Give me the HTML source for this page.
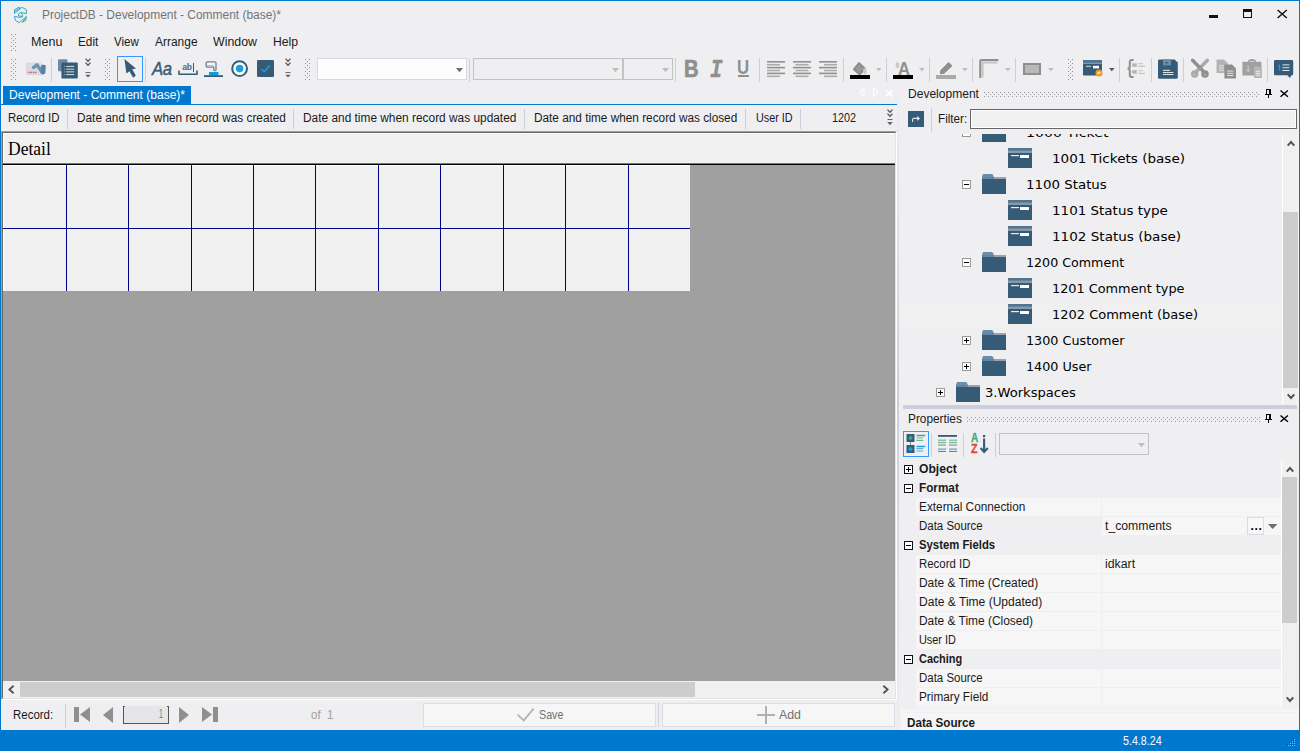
<!DOCTYPE html>
<html lang="en"><head><meta charset="utf-8"><title>ProjectDB - Development - Comment (base)*</title>
<style>
html,body{margin:0;padding:0;}
body{width:1300px;height:751px;overflow:hidden;background:#efeff1;position:relative;font-family:"Liberation Sans",sans-serif;font-size:12px;}
#app{position:absolute;left:0;top:0;width:1300px;height:751px;overflow:hidden;background:#efeff1;}
#app div,#app span.t,#app svg.i{position:absolute;box-sizing:border-box;}
span.t{white-space:pre;}
svg.i{overflow:visible;}
</style></head><body><div id="app">
<div style="left:0px;top:0px;width:1300px;height:1px;background:#0078d0;"></div>
<div style="left:0px;top:0px;width:1px;height:751px;background:#0078d0;"></div>
<div style="left:1299px;top:0px;width:1px;height:751px;background:#0078d0;"></div>
<div style="left:0px;top:730px;width:1300px;height:21px;background:#0078d0;"></div>
<svg class="i" style="left:13px;top:6px" width="16" height="18" viewBox="0 0 16 18" ><defs><linearGradient id="lg" x1="0" y1="0" x2="1" y2="1"><stop offset="0" stop-color="#2a9de0"/><stop offset="0.55" stop-color="#2ba3b4"/><stop offset="1" stop-color="#3aa66a"/></linearGradient></defs>
<g fill="none" stroke="url(#lg)" stroke-width="0.95" stroke-linejoin="round" stroke-linecap="round">
<path d="M1.5 7.4 V3.7 L5.9 1.3 L7.3 2.1 L2.7 4.7 V6.5 L8.9 1.3 L13.4 3.7 V7.6 L7.6 6.5 L5.6 7.7 V9.9 L9.4 10.5 V8.3 L7.6 6.5"/>
<path d="M9.4 10.5 L7.4 11.5 L1.5 10.4 L2.4 14.5 L6.4 16.6 L13.4 10.4 L12.8 14.4 L9.2 16.4 L12.4 12.4"/>
</g></svg>
<span class="t" style="left:42.2px;top:2.84px;font-family:'Liberation Sans',sans-serif;font-size:12px;line-height:24px;color:#747474;transform:scaleX(0.9952);transform-origin:0 0;">ProjectDB - Development - Comment (base)*</span>
<div style="left:1209px;top:15px;width:9px;height:3px;background:#111;"></div>
<div style="left:1243px;top:9px;width:9px;height:9px;border:1px solid #111;border-top-width:3px;"></div>
<svg class="i" style="left:1277px;top:9px" width="11" height="11" viewBox="0 0 11 11" ><path d="M0.6 1 L9.8 9 M9.8 1 L0.6 9" stroke="#111" stroke-width="1.45" fill="none"/></svg>
<svg class="i" style="left:11px;top:34px" width="5" height="17" viewBox="0 0 5 17" ><g fill="#929292" shape-rendering="crispEdges"><rect x="0" y="0" width="1" height="1"/><rect x="4" y="0" width="1" height="1"/><rect x="2" y="2" width="1" height="1"/><rect x="0" y="4" width="1" height="1"/><rect x="4" y="4" width="1" height="1"/><rect x="2" y="6" width="1" height="1"/><rect x="0" y="8" width="1" height="1"/><rect x="4" y="8" width="1" height="1"/><rect x="2" y="10" width="1" height="1"/><rect x="0" y="12" width="1" height="1"/><rect x="4" y="12" width="1" height="1"/><rect x="2" y="14" width="1" height="1"/><rect x="0" y="16" width="1" height="1"/><rect x="4" y="16" width="1" height="1"/></g></svg>
<span class="t" style="left:31.36px;top:29.84px;font-family:'Liberation Sans',sans-serif;font-size:12px;line-height:24px;color:#1a1a1a;transform:scaleX(1.0442);transform-origin:0 0;">Menu</span>
<span class="t" style="left:78.22px;top:29.84px;font-family:'Liberation Sans',sans-serif;font-size:12px;line-height:24px;color:#1a1a1a;transform:scaleX(0.9823);transform-origin:0 0;">Edit</span>
<span class="t" style="left:113.8px;top:29.84px;font-family:'Liberation Sans',sans-serif;font-size:12px;line-height:24px;color:#1a1a1a;transform:scaleX(0.9631);transform-origin:0 0;">View</span>
<span class="t" style="left:154.7px;top:29.84px;font-family:'Liberation Sans',sans-serif;font-size:12px;line-height:24px;color:#1a1a1a;transform:scaleX(0.9964);transform-origin:0 0;">Arrange</span>
<span class="t" style="left:212.8px;top:29.84px;font-family:'Liberation Sans',sans-serif;font-size:12px;line-height:24px;color:#1a1a1a;transform:scaleX(1.0292);transform-origin:0 0;">Window</span>
<span class="t" style="left:273.08px;top:29.84px;font-family:'Liberation Sans',sans-serif;font-size:12px;line-height:24px;color:#1a1a1a;transform:scaleX(1.0151);transform-origin:0 0;">Help</span>
<svg class="i" style="left:11px;top:59px" width="5" height="21" viewBox="0 0 5 21" ><g fill="#929292" shape-rendering="crispEdges"><rect x="0" y="0" width="1" height="1"/><rect x="4" y="0" width="1" height="1"/><rect x="2" y="2" width="1" height="1"/><rect x="0" y="4" width="1" height="1"/><rect x="4" y="4" width="1" height="1"/><rect x="2" y="6" width="1" height="1"/><rect x="0" y="8" width="1" height="1"/><rect x="4" y="8" width="1" height="1"/><rect x="2" y="10" width="1" height="1"/><rect x="0" y="12" width="1" height="1"/><rect x="4" y="12" width="1" height="1"/><rect x="2" y="14" width="1" height="1"/><rect x="0" y="16" width="1" height="1"/><rect x="4" y="16" width="1" height="1"/><rect x="2" y="18" width="1" height="1"/><rect x="0" y="20" width="1" height="1"/><rect x="4" y="20" width="1" height="1"/></g></svg>
<svg class="i" style="left:105px;top:59px" width="5" height="21" viewBox="0 0 5 21" ><g fill="#929292" shape-rendering="crispEdges"><rect x="0" y="0" width="1" height="1"/><rect x="4" y="0" width="1" height="1"/><rect x="2" y="2" width="1" height="1"/><rect x="0" y="4" width="1" height="1"/><rect x="4" y="4" width="1" height="1"/><rect x="2" y="6" width="1" height="1"/><rect x="0" y="8" width="1" height="1"/><rect x="4" y="8" width="1" height="1"/><rect x="2" y="10" width="1" height="1"/><rect x="0" y="12" width="1" height="1"/><rect x="4" y="12" width="1" height="1"/><rect x="2" y="14" width="1" height="1"/><rect x="0" y="16" width="1" height="1"/><rect x="4" y="16" width="1" height="1"/><rect x="2" y="18" width="1" height="1"/><rect x="0" y="20" width="1" height="1"/><rect x="4" y="20" width="1" height="1"/></g></svg>
<svg class="i" style="left:305px;top:59px" width="5" height="21" viewBox="0 0 5 21" ><g fill="#929292" shape-rendering="crispEdges"><rect x="0" y="0" width="1" height="1"/><rect x="4" y="0" width="1" height="1"/><rect x="2" y="2" width="1" height="1"/><rect x="0" y="4" width="1" height="1"/><rect x="4" y="4" width="1" height="1"/><rect x="2" y="6" width="1" height="1"/><rect x="0" y="8" width="1" height="1"/><rect x="4" y="8" width="1" height="1"/><rect x="2" y="10" width="1" height="1"/><rect x="0" y="12" width="1" height="1"/><rect x="4" y="12" width="1" height="1"/><rect x="2" y="14" width="1" height="1"/><rect x="0" y="16" width="1" height="1"/><rect x="4" y="16" width="1" height="1"/><rect x="2" y="18" width="1" height="1"/><rect x="0" y="20" width="1" height="1"/><rect x="4" y="20" width="1" height="1"/></g></svg>
<svg class="i" style="left:1068px;top:59px" width="5" height="21" viewBox="0 0 5 21" ><g fill="#929292" shape-rendering="crispEdges"><rect x="0" y="0" width="1" height="1"/><rect x="4" y="0" width="1" height="1"/><rect x="2" y="2" width="1" height="1"/><rect x="0" y="4" width="1" height="1"/><rect x="4" y="4" width="1" height="1"/><rect x="2" y="6" width="1" height="1"/><rect x="0" y="8" width="1" height="1"/><rect x="4" y="8" width="1" height="1"/><rect x="2" y="10" width="1" height="1"/><rect x="0" y="12" width="1" height="1"/><rect x="4" y="12" width="1" height="1"/><rect x="2" y="14" width="1" height="1"/><rect x="0" y="16" width="1" height="1"/><rect x="4" y="16" width="1" height="1"/><rect x="2" y="18" width="1" height="1"/><rect x="0" y="20" width="1" height="1"/><rect x="4" y="20" width="1" height="1"/></g></svg>
<div style="left:51px;top:58px;width:1px;height:24px;background:#cdd0da;"></div>
<div style="left:145px;top:58px;width:1px;height:24px;background:#cdd0da;"></div>
<div style="left:469px;top:58px;width:1px;height:24px;background:#cdd0da;"></div>
<div style="left:675px;top:58px;width:1px;height:24px;background:#cdd0da;"></div>
<div style="left:759px;top:58px;width:1px;height:24px;background:#cdd0da;"></div>
<div style="left:843px;top:58px;width:1px;height:24px;background:#cdd0da;"></div>
<div style="left:886px;top:58px;width:1px;height:24px;background:#cdd0da;"></div>
<div style="left:929px;top:58px;width:1px;height:24px;background:#cdd0da;"></div>
<div style="left:972px;top:58px;width:1px;height:24px;background:#cdd0da;"></div>
<div style="left:1015px;top:58px;width:1px;height:24px;background:#cdd0da;"></div>
<div style="left:1119px;top:58px;width:1px;height:24px;background:#cdd0da;"></div>
<div style="left:1151px;top:58px;width:1px;height:24px;background:#cdd0da;"></div>
<div style="left:1183px;top:58px;width:1px;height:24px;background:#cdd0da;"></div>
<div style="left:1267px;top:58px;width:1px;height:24px;background:#cdd0da;"></div>
<div style="left:117px;top:56px;width:26px;height:26px;border:1px solid #3399ff;"></div>
<div style="left:317px;top:58px;width:150px;height:22px;border:1px solid #d6d8e3;background:#fdfdfd;"></div>
<svg class="i" style="left:456px;top:68px" width="7" height="5" viewBox="0 0 7 5" ><path d="M0 0 H7 L3.5 4.2 Z" fill="#6e6e6e"/></svg>
<div style="left:473px;top:58px;width:150px;height:22px;border:1px solid #c2c2c2;"></div>
<div style="left:623px;top:58px;width:50px;height:22px;border:1px solid #c2c2c2;"></div>
<svg class="i" style="left:612px;top:68px" width="7" height="5" viewBox="0 0 7 5" ><path d="M0 0 H7 L3.5 4.2 Z" fill="#bdbdbd"/></svg>
<svg class="i" style="left:662px;top:68px" width="7" height="5" viewBox="0 0 7 5" ><path d="M0 0 H7 L3.5 4.2 Z" fill="#bdbdbd"/></svg>
<svg class="i" style="left:875.9px;top:68px" width="6" height="4" viewBox="0 0 6 4" ><path d="M0 0 H5.6 L2.8 3.2 Z" fill="#bdbdbd"/></svg>
<svg class="i" style="left:918.9px;top:68px" width="6" height="4" viewBox="0 0 6 4" ><path d="M0 0 H5.6 L2.8 3.2 Z" fill="#bdbdbd"/></svg>
<svg class="i" style="left:961.9px;top:68px" width="6" height="4" viewBox="0 0 6 4" ><path d="M0 0 H5.6 L2.8 3.2 Z" fill="#bdbdbd"/></svg>
<svg class="i" style="left:1004.9px;top:68px" width="6" height="4" viewBox="0 0 6 4" ><path d="M0 0 H5.6 L2.8 3.2 Z" fill="#bdbdbd"/></svg>
<svg class="i" style="left:1047.9px;top:68px" width="6" height="4" viewBox="0 0 6 4" ><path d="M0 0 H5.6 L2.8 3.2 Z" fill="#bdbdbd"/></svg>
<svg class="i" style="left:1108.9px;top:68px" width="6" height="4" viewBox="0 0 6 4" ><path d="M0 0 H5.6 L2.8 3.2 Z" fill="#555"/></svg>
<svg class="i" style="left:26px;top:62px" width="21" height="14" viewBox="0 0 21 14" ><rect x="0.3" y="1.2" width="15" height="11.6" rx="0.8" fill="#d9dce1" stroke="#d0d3d8" stroke-width="0.6"/><g fill="#e8524a"><rect x="2.2" y="9.7" width="1.5" height="1.4"/><rect x="4.5" y="9.7" width="1.5" height="1.4"/><rect x="6.8" y="9.7" width="1.5" height="1.4"/><rect x="9.1" y="9.7" width="1.5" height="1.4"/></g><path d="M7.6 5.4 L11 2.9 L16.4 10.6" fill="none" stroke="#7092b5" stroke-width="3.4" stroke-linecap="round" stroke-linejoin="round"/><rect x="14.9" y="2.7" width="4.7" height="9.6" rx="1.6" fill="#5d81a4" transform="rotate(4 17 7)"/></svg>
<svg class="i" style="left:58px;top:59px" width="21" height="21" viewBox="0 0 21 21" ><rect x="0" y="0.2" width="9.4" height="12" rx="1" fill="#6b8bab"/><rect x="3.4" y="3.4" width="16.4" height="16.2" rx="1" fill="#355b76"/><g fill="#c9d2da"><rect x="8.2" y="6.9" width="8" height="1.1"/><rect x="8.2" y="9.6" width="8" height="1.1"/><rect x="8.2" y="12.3" width="8" height="1.1"/><rect x="8.2" y="15" width="8" height="1.1"/></g><g fill="#9fb0bf"><rect x="6.2" y="6.9" width="1" height="1.1"/><rect x="6.2" y="9.6" width="1" height="1.1"/><rect x="6.2" y="12.3" width="1" height="1.1"/><rect x="6.2" y="15" width="1" height="1.1"/></g></svg>
<svg class="i" style="left:84.6px;top:57.8px" width="6" height="21" viewBox="0 0 6 21" ><g fill="none" stroke="#555" stroke-width="1.3"><path d="M0.5 0.6 L3 3.2 L5.5 0.6"/><path d="M0.5 4.6 L3 7.2 L5.5 4.6"/></g><rect x="0.5" y="14" width="5" height="1" fill="#666"/><path d="M0.3 16.8 H5.7 L3 19.6 Z" fill="#666"/></svg>
<svg class="i" style="left:284.6px;top:57.8px" width="6" height="21" viewBox="0 0 6 21" ><g fill="none" stroke="#555" stroke-width="1.3"><path d="M0.5 0.6 L3 3.2 L5.5 0.6"/><path d="M0.5 4.6 L3 7.2 L5.5 4.6"/></g><rect x="0.5" y="14" width="5" height="1" fill="#666"/><path d="M0.3 16.8 H5.7 L3 19.6 Z" fill="#666"/></svg>
<svg class="i" style="left:124px;top:59px" width="13" height="20" viewBox="0 0 13 20" ><path d="M0.4 0 L12 9.4 L8.2 10.2 L11.8 16.6 L9.2 18.8 L5.4 12.2 L2.4 14.6 Z" fill="#355b76"/></svg>
<span class="t" style="left:151.6px;top:57.36px;font-family:'Liberation Sans',sans-serif;font-size:18px;line-height:24px;color:#355b76;font-style:italic;transform:scaleX(0.93);transform-origin:0 0;letter-spacing:-0.5px;-webkit-text-stroke:0.45px #365c78;">Aa</span>
<span class="t" style="left:182.2px;top:55.02px;font-family:'Liberation Sans',sans-serif;font-size:8.6px;line-height:24px;color:#4a6d89;font-weight:700;letter-spacing:-0.2px;">ab</span>
<div style="left:193.2px;top:63.4px;width:1.2px;height:8.2px;background:#355b76;"></div>
<svg class="i" style="left:178px;top:70px" width="20" height="6" viewBox="0 0 20 6" ><path d="M1 0.5 V4.2 H19 V0.5" fill="none" stroke="#355b76" stroke-width="1.6" stroke-linejoin="round"/></svg>
<svg class="i" style="left:204px;top:61px" width="20" height="17" viewBox="0 0 20 17" ><path d="M3.2 0.9 H10.8 Q12 0.9 12 2.1 V8.4 Q12 9.6 10.9 9.6 Q9.8 9.6 9.8 8.4 V6.2 H3.2 Q2.2 6.2 2.2 5.2 V1.9 Q2.2 0.9 3.2 0.9 Z" fill="#f4f5f7" stroke="#6d8197" stroke-width="1.3"/><path d="M3.4 4.6 H9.6" stroke="#8d9bab" stroke-width="1" stroke-dasharray="1 0.6"/><rect x="5" y="11" width="9.5" height="3.4" fill="#0c9ddd"/><rect x="0" y="14.2" width="19" height="1.8" fill="#355b76"/></svg>
<svg class="i" style="left:231px;top:60px" width="18" height="18" viewBox="0 0 18 18" ><circle cx="8.6" cy="8.6" r="7.4" fill="#fff" stroke="#355b76" stroke-width="2"/><circle cx="8.6" cy="8.6" r="3.8" fill="#1a9fe0"/></svg>
<svg class="i" style="left:257px;top:60px" width="18" height="18" viewBox="0 0 18 18" ><rect x="0" y="0" width="17" height="17" rx="1.2" fill="#355b76"/><path d="M4.2 9 L7.4 11.8 L12.8 5.2" fill="none" stroke="#1a9fe0" stroke-width="1.5"/></svg>
<span class="t" style="left:683.6px;top:56.68px;font-family:'Liberation Sans',sans-serif;font-size:24px;line-height:24px;color:#8f8f8f;font-weight:700;transform:scaleX(0.84);transform-origin:0 0;-webkit-text-stroke:0.7px #8f8f8f;">B</span>
<span class="t" style="left:709.6px;top:58.07px;font-family:'Liberation Mono',monospace;font-size:26px;line-height:24px;color:#8f8f8f;font-weight:700;font-style:italic;transform:scaleX(0.8);transform-origin:0 0;-webkit-text-stroke:0.5px #8f8f8f;">I</span>
<span class="t" style="left:737px;top:55.32px;font-family:'Liberation Sans',sans-serif;font-size:21px;line-height:24px;color:#8f8f8f;font-weight:700;transform:scaleX(0.8);transform-origin:0 0;">U</span>
<div style="left:738px;top:75.2px;width:11px;height:1.8px;background:#8f8f8f;"></div>
<svg class="i" style="left:767px;top:61px" width="18" height="17" viewBox="0 0 18 17" ><rect x="0" y="0.0" width="18" height="1.6" fill="#909090"/><rect x="0" y="2.9" width="13" height="1.6" fill="#ababab"/><rect x="0" y="5.8" width="18" height="1.6" fill="#909090"/><rect x="0" y="8.7" width="13" height="1.6" fill="#ababab"/><rect x="0" y="11.6" width="18" height="1.6" fill="#909090"/><rect x="0" y="14.5" width="13" height="1.6" fill="#ababab"/></svg>
<svg class="i" style="left:793px;top:61px" width="18" height="17" viewBox="0 0 18 17" ><rect x="0.0" y="0.0" width="18" height="1.6" fill="#909090"/><rect x="2.5" y="2.9" width="13" height="1.6" fill="#ababab"/><rect x="0.0" y="5.8" width="18" height="1.6" fill="#909090"/><rect x="2.5" y="8.7" width="13" height="1.6" fill="#ababab"/><rect x="0.0" y="11.6" width="18" height="1.6" fill="#909090"/><rect x="2.5" y="14.5" width="13" height="1.6" fill="#ababab"/></svg>
<svg class="i" style="left:819px;top:61px" width="18" height="17" viewBox="0 0 18 17" ><rect x="0" y="0.0" width="18" height="1.6" fill="#909090"/><rect x="5" y="2.9" width="13" height="1.6" fill="#ababab"/><rect x="0" y="5.8" width="18" height="1.6" fill="#909090"/><rect x="5" y="8.7" width="13" height="1.6" fill="#ababab"/><rect x="0" y="11.6" width="18" height="1.6" fill="#909090"/><rect x="5" y="14.5" width="13" height="1.6" fill="#ababab"/></svg>
<svg class="i" style="left:850px;top:61px" width="21" height="18" viewBox="0 0 21 18" ><path d="M9 0.8 L15.6 7 Q16.2 7.6 15.6 8.3 L11 13.4 Q9.6 14.6 8.2 13.4 L3.4 9.2 Q2.6 8.2 3.4 7.2 Z" fill="#8f8f8f"/><g stroke="#ababab" stroke-width="0.7" fill="none"><path d="M6.2 6.4 L10 10 M8 4.8 L11.8 8.4 M6.6 9 L10.2 5.2 M8.4 10.6 L12 6.8"/></g><rect x="13.2" y="7.2" width="3.2" height="6" rx="1.4" fill="#c8c8c8"/><rect x="0" y="14" width="20" height="4" fill="#000"/></svg>
<span class="t" style="left:897.6px;top:56.59px;font-family:'Liberation Sans',sans-serif;font-size:18.5px;line-height:24px;color:#8f8f8f;font-weight:700;transform:scaleX(0.9);transform-origin:0 0;">A</span>
<svg class="i" style="left:893px;top:61px" width="21" height="18" viewBox="0 0 21 18" ><ellipse cx="4.5" cy="4.2" rx="1.8" ry="2.9" fill="#c8c8c8"/><rect x="0" y="14" width="20" height="4" fill="#000"/></svg>
<svg class="i" style="left:936px;top:61px" width="21" height="18" viewBox="0 0 21 18" ><path d="M12.6 1.6 L16 4.8 L8.2 12.2 L4.4 12.8 L4.8 9.4 Z" fill="#8f8f8f" stroke="#8f8f8f" stroke-width="1" stroke-linejoin="round"/><rect x="0" y="14" width="20" height="4" fill="#aaa"/></svg>
<svg class="i" style="left:979px;top:59px" width="21" height="20" viewBox="0 0 21 20" ><path d="M1.2 19 V2.2 Q1.2 1 2.4 1 H19.4" fill="none" stroke="#8f8f8f" stroke-width="2"/><path d="M3.5 18.4 V3.5 H18.6" fill="none" stroke="#c4c4c4" stroke-width="2.1"/></svg>
<div style="left:1023px;top:63px;width:18px;height:12px;background:#b9b9b9;border:2px solid #8f8f8f;"></div>
<svg class="i" style="left:1083px;top:60px" width="21" height="17" viewBox="0 0 21 17" ><rect x="0" y="0" width="19" height="15.6" rx="1.2" fill="#355b76"/><rect x="0" y="0" width="19" height="3" rx="1" fill="#4d7596"/><rect x="0" y="2.8" width="19" height="1" fill="#9aa7b3"/><rect x="3" y="5.8" width="5" height="1" fill="#d5dde3"/><rect x="10" y="5.8" width="6" height="2.6" fill="#fff"/><circle cx="16" cy="13" r="3.5" fill="#f39a1d"/><path d="M14.6 13.6 L17.4 12.2" stroke="#fff" stroke-width="1.3"/></svg>
<svg class="i" style="left:1127px;top:59px" width="19" height="20" viewBox="0 0 19 20" ><path d="M6.6 0.9 H4.8 Q2.8 0.9 2.8 2.8 V7.4 Q2.8 9.2 0.6 9.4 Q2.8 9.6 2.8 11.4 V16.2 Q2.8 18 4.8 18 H6.6" fill="none" stroke="#8f8f8f" stroke-width="2"/><rect x="5.2" y="4.4" width="4.6" height="3.4" fill="#b4b4b4"/><rect x="5.2" y="11.2" width="4.6" height="3.4" fill="#b4b4b4"/><g fill="#c4c4c4"><rect x="11.2" y="4.2" width="4.6" height="1"/><rect x="11.2" y="6.6" width="6.8" height="1.2"/><rect x="11.2" y="11.2" width="4.6" height="1"/><rect x="11.2" y="13.8" width="6.8" height="1.2"/></g></svg>
<svg class="i" style="left:1158px;top:59px" width="21" height="21" viewBox="0 0 21 21" ><path d="M1.4 0.4 H16.6 L19.8 3.6 V18.4 Q19.8 19.8 18.4 19.8 H1.4 Q0 19.8 0 18.4 V1.8 Q0 0.4 1.4 0.4 Z" fill="#355b76"/><rect x="5" y="0.4" width="8" height="6" fill="#6b8bab"/><rect x="7" y="3.2" width="3" height="1" fill="#355b76"/><g fill="#dfe6eb"><rect x="5" y="10.8" width="7" height="1.1"/><rect x="5" y="13" width="10.4" height="1"/><rect x="5" y="15" width="10.4" height="1"/></g></svg>
<svg class="i" style="left:1190px;top:59px" width="20" height="20" viewBox="0 0 20 20" ><path d="M17.4 1.2 L5 14" stroke="#a9a9a9" stroke-width="3.4" stroke-linecap="round" fill="none"/><circle cx="4.7" cy="15" r="2.5" fill="none" stroke="#a9a9a9" stroke-width="2.5"/><path d="M2.6 1.2 L15 14" stroke="#8f8f8f" stroke-width="3.4" stroke-linecap="round" fill="none"/><circle cx="15" cy="15" r="2.5" fill="none" stroke="#8f8f8f" stroke-width="2.5"/><circle cx="10" cy="9.6" r="0.8" fill="#b5b5b5"/></svg>
<svg class="i" style="left:1216px;top:59px" width="21" height="20" viewBox="0 0 21 20" ><path d="M0.5 0.4 H8 L12 4.4 V14 H0.5 Z" fill="#b3b3b3"/><g fill="#e4e4e4"><rect x="3" y="6.4" width="5" height="1"/><rect x="3" y="8.6" width="5" height="1"/><rect x="3" y="10.8" width="5" height="1"/></g><path d="M8.4 5.4 H16 L20 9.4 V19.6 H8.4 Z" fill="#8f8f8f"/><g fill="#e4e4e4"><rect x="11" y="11.6" width="6.4" height="1"/><rect x="11" y="13.8" width="6.4" height="1"/><rect x="11" y="16" width="6.4" height="1"/></g></svg>
<svg class="i" style="left:1242px;top:59px" width="21" height="20" viewBox="0 0 21 20" ><path d="M6 2.8 Q6 0 10 0 Q14 0 14 2.8 H19.4 V16.4 H0.4 V2.8 Z" fill="#a0a0a0"/><rect x="7.4" y="1.9" width="5.2" height="1" rx="0.5" fill="#cfcfcf"/><path d="M6.2 6.8 V12.4 M4 10.4 L6.2 12.6 L8.4 10.4" stroke="#cfcfcf" stroke-width="1" fill="none"/><path d="M12 7.4 H17.4 L19.8 9.8 V19 H12 Z" fill="#b6b6b6"/><g fill="#ededed"><rect x="13.8" y="11.8" width="4.2" height="1"/><rect x="13.8" y="13.8" width="4.2" height="1"/><rect x="13.8" y="15.8" width="4.2" height="1"/></g></svg>
<svg class="i" style="left:1274px;top:60px" width="20" height="18" viewBox="0 0 20 18" ><path d="M1.2 0 H18 Q19.2 0 19.2 1.2 V14 Q19.2 15.2 18 15.2 H17.4 L16 18 L13.4 15.2 H1.2 Q0 15.2 0 14 V1.2 Q0 0 1.2 0 Z" fill="#355b76"/><g fill="#dfe6eb"><rect x="8.4" y="4.4" width="7" height="1"/><rect x="8.4" y="7.2" width="7" height="1"/><rect x="8.4" y="10" width="7" height="1"/></g><path d="M5.6 4.8 V10.8 M4.2 6.6 L5.6 5" stroke="#1a9fe0" stroke-width="1.2" fill="none"/></svg>
<div style="left:3px;top:86px;width:188px;height:19px;background:#0078d0;"></div>
<div style="left:1px;top:104px;width:896px;height:1px;background:#0078d0;"></div>
<span class="t" style="left:8.6px;top:82.84px;font-family:'Liberation Sans',sans-serif;font-size:12px;line-height:24px;color:#fff;transform:scaleX(1.0037);transform-origin:0 0;">Development - Comment (base)*</span>
<svg class="i" style="left:859px;top:88px" width="6" height="10" viewBox="0 0 6 10" ><path d="M5 0.6 V8.6 L0.6 4.6 Z" fill="none" stroke="#fff" stroke-width="1.1" stroke-linejoin="miter"/></svg>
<svg class="i" style="left:873px;top:88px" width="6" height="10" viewBox="0 0 6 10" ><path d="M0.5 0.6 V8.6 L4.9 4.6 Z" fill="none" stroke="#fff" stroke-width="1.1" stroke-linejoin="miter"/></svg>
<svg class="i" style="left:885px;top:90px" width="9" height="8" viewBox="0 0 9 8" ><path d="M0.5 0.4 L7.7 6.7 M7.7 0.4 L0.5 6.7" stroke="#fff" stroke-width="1.6" fill="none"/></svg>
<span class="t" style="left:8.15px;top:105.84px;font-family:'Liberation Sans',sans-serif;font-size:12px;line-height:24px;color:#1a1a1a;transform:scaleX(0.9524);transform-origin:0 0;">Record ID</span>
<span class="t" style="left:77.11px;top:105.84px;font-family:'Liberation Sans',sans-serif;font-size:12px;line-height:24px;color:#1a1a1a;transform:scaleX(0.9850);transform-origin:0 0;">Date and time when record was created</span>
<span class="t" style="left:303.11px;top:105.84px;font-family:'Liberation Sans',sans-serif;font-size:12px;line-height:24px;color:#1a1a1a;transform:scaleX(0.9904);transform-origin:0 0;">Date and time when record was updated</span>
<span class="t" style="left:534.32px;top:105.84px;font-family:'Liberation Sans',sans-serif;font-size:12px;line-height:24px;color:#1a1a1a;transform:scaleX(0.9829);transform-origin:0 0;">Date and time when record was closed</span>
<span class="t" style="left:755.6px;top:105.84px;font-family:'Liberation Sans',sans-serif;font-size:12px;line-height:24px;color:#1a1a1a;transform:scaleX(0.9019);transform-origin:0 0;">User ID</span>
<span class="t" style="left:832.0px;top:105.84px;font-family:'Liberation Sans',sans-serif;font-size:12px;line-height:24px;color:#1a1a1a;transform:scaleX(0.9000);transform-origin:0 0;">1202</span>
<div style="left:67px;top:109px;width:1px;height:20px;background:#cdd0da;"></div>
<div style="left:293px;top:109px;width:1px;height:20px;background:#cdd0da;"></div>
<div style="left:524px;top:109px;width:1px;height:20px;background:#cdd0da;"></div>
<div style="left:745px;top:109px;width:1px;height:20px;background:#cdd0da;"></div>
<div style="left:800px;top:109px;width:1px;height:20px;background:#cdd0da;"></div>
<svg class="i" style="left:887px;top:109px" width="6" height="17" viewBox="0 0 6 17" ><g fill="none" stroke="#555" stroke-width="1.3"><path d="M0.5 0.6 L3 3.2 L5.5 0.6"/><path d="M0.5 4.6 L3 7.2 L5.5 4.6"/></g><rect x="0.5" y="10" width="5" height="1" fill="#666"/><path d="M0.2 13 H5.8 L3 16.2 Z" fill="#666"/></svg>
<div style="left:1px;top:131px;width:896px;height:569px;background:#a0a0a0;border-style:solid;border-width:1px;border-color:#a0a0a0 #fff #fff #a0a0a0;"></div>
<div style="left:2px;top:132px;width:894px;height:567px;background:#a0a0a0;border-style:solid;border-width:1px;border-color:#696969 #e3e3e3 #e3e3e3 #696969;"></div>
<div style="left:3px;top:133px;width:892px;height:31px;background:#f0f0f0;border-top:1px solid #fff;border-left:1px solid #fff;"></div>
<div style="left:3px;top:163px;width:892px;height:1px;background:#7a7a7a;"></div>
<div style="left:3px;top:164px;width:892px;height:1px;background:#000;"></div>
<span class="t" style="left:8.21px;top:136.99px;font-family:'Liberation Serif',serif;font-size:17.8px;line-height:24px;color:#000;transform:scaleX(0.9859);transform-origin:0 0;">Detail</span>
<div style="left:3px;top:165px;width:687px;height:126px;background:#f0f0f0;border-top:1px solid #fff;border-left:1px solid #fff;"></div>
<div style="left:66px;top:165px;width:1px;height:126px;background:#00008b;"></div>
<div style="left:128px;top:165px;width:1px;height:126px;background:#00008b;"></div>
<div style="left:191px;top:165px;width:1px;height:126px;background:#00008b;"></div>
<div style="left:253px;top:165px;width:1px;height:126px;background:#00008b;"></div>
<div style="left:315px;top:165px;width:1px;height:126px;background:#00008b;"></div>
<div style="left:378px;top:165px;width:1px;height:126px;background:#00008b;"></div>
<div style="left:440px;top:165px;width:1px;height:126px;background:#00008b;"></div>
<div style="left:503px;top:165px;width:1px;height:126px;background:#00008b;"></div>
<div style="left:565px;top:165px;width:1px;height:126px;background:#00008b;"></div>
<div style="left:628px;top:165px;width:1px;height:126px;background:#00008b;"></div>
<div style="left:3px;top:228px;width:687px;height:1px;background:#00008b;"></div>
<div style="left:3px;top:681px;width:892px;height:17px;background:#f0f0f0;"></div>
<div style="left:20px;top:682px;width:675px;height:15px;background:#cdcdcd;"></div>
<svg class="i" style="left:8px;top:685px" width="7" height="9" viewBox="0 0 7 9" ><path d="M5.6 0.8 L1.4 4.5 L5.6 8.2" stroke="#505050" stroke-width="1.8" fill="none"/></svg>
<svg class="i" style="left:882px;top:685px" width="7" height="9" viewBox="0 0 7 9" ><path d="M1.4 0.8 L5.6 4.5 L1.4 8.2" stroke="#505050" stroke-width="1.8" fill="none"/></svg>
<span class="t" style="left:13.45px;top:702.84px;font-family:'Liberation Sans',sans-serif;font-size:12px;line-height:24px;color:#1a1a1a;transform:scaleX(0.9550);transform-origin:0 0;">Record:</span>
<div style="left:65px;top:704px;width:1px;height:24px;background:#cdd0da;"></div>
<svg class="i" style="left:74px;top:707px" width="17" height="16" viewBox="0 0 17 16" ><rect x="0" y="0" width="5" height="15" fill="#8f8f8f"/><path d="M16 0 L6 7.5 L16 15 Z" fill="#8f8f8f"/></svg>
<svg class="i" style="left:103px;top:707px" width="10" height="16" viewBox="0 0 10 16" ><path d="M10 0 L0 8 L10 16 Z" fill="#8f8f8f"/></svg>
<div style="left:123px;top:706px;width:46px;height:18px;background:#e6e6e9;border:1px solid #555;border-top-color:transparent;"></div>
<div style="left:123px;top:706px;width:2px;height:1px;background:#555;"></div>
<div style="left:167px;top:706px;width:2px;height:1px;background:#555;"></div>
<span class="t" style="left:158.91px;top:701.84px;font-family:'Liberation Sans',sans-serif;font-size:12px;line-height:24px;color:#757575;transform:scaleX(0.5905);transform-origin:0 0;">1</span>
<svg class="i" style="left:179px;top:707px" width="10" height="16" viewBox="0 0 10 16" ><path d="M0 0 L10 8 L0 16 Z" fill="#8f8f8f"/></svg>
<svg class="i" style="left:202px;top:707px" width="17" height="16" viewBox="0 0 17 16" ><rect x="11" y="0" width="5" height="15" fill="#8f8f8f"/><path d="M0 0 L10 7.5 L0 15 Z" fill="#8f8f8f"/></svg>
<span class="t" style="left:311.02px;top:702.84px;font-family:'Liberation Sans',sans-serif;font-size:12px;line-height:24px;color:#a0a0a0;transform:scaleX(0.9573);transform-origin:0 0;">of  1</span>
<div style="left:423px;top:703px;width:233px;height:24px;background:#f6f6f6;border:1px solid #dcdce8;"></div>
<div style="left:658px;top:703px;width:1px;height:24px;background:#cdd0da;"></div>
<div style="left:662px;top:703px;width:233px;height:24px;background:#f6f6f6;border:1px solid #dcdce8;"></div>
<svg class="i" style="left:517px;top:708px" width="18" height="14" viewBox="0 0 18 14" ><path d="M0.6 6.6 L6.8 12.4 L16.6 0.6" stroke="#b2b2b2" stroke-width="1.7" fill="none"/></svg>
<span class="t" style="left:538.85px;top:702.84px;font-family:'Liberation Sans',sans-serif;font-size:12px;line-height:24px;color:#707070;transform:scaleX(0.8914);transform-origin:0 0;">Save</span>
<svg class="i" style="left:757px;top:706px" width="18" height="18" viewBox="0 0 18 18" ><path d="M9 0 V18 M0 9 H18" stroke="#b0b0b0" stroke-width="2" fill="none"/></svg>
<span class="t" style="left:779.3px;top:702.84px;font-family:'Liberation Sans',sans-serif;font-size:12px;line-height:24px;color:#707070;transform:scaleX(1.0293);transform-origin:0 0;">Add</span>
<div style="left:897px;top:86px;width:2px;height:644px;background:linear-gradient(to bottom, #eeeef1 0%, #cccedb 50%, #eeeef1 100%);"></div>
<span class="t" style="left:908.2px;top:81.84px;font-family:'Liberation Sans',sans-serif;font-size:12px;line-height:24px;color:#1a1a1a;transform:scaleX(1.0036);transform-origin:0 0;">Development</span>
<svg class="i" style="left:984px;top:92px" width="275" height="5" viewBox="0 0 275 5" ><g fill="#999" shape-rendering="crispEdges"><rect x="0" y="0" width="1" height="1"/><rect x="0" y="4" width="1" height="1"/><rect x="2" y="2" width="1" height="1"/><rect x="4" y="0" width="1" height="1"/><rect x="4" y="4" width="1" height="1"/><rect x="6" y="2" width="1" height="1"/><rect x="8" y="0" width="1" height="1"/><rect x="8" y="4" width="1" height="1"/><rect x="10" y="2" width="1" height="1"/><rect x="12" y="0" width="1" height="1"/><rect x="12" y="4" width="1" height="1"/><rect x="14" y="2" width="1" height="1"/><rect x="16" y="0" width="1" height="1"/><rect x="16" y="4" width="1" height="1"/><rect x="18" y="2" width="1" height="1"/><rect x="20" y="0" width="1" height="1"/><rect x="20" y="4" width="1" height="1"/><rect x="22" y="2" width="1" height="1"/><rect x="24" y="0" width="1" height="1"/><rect x="24" y="4" width="1" height="1"/><rect x="26" y="2" width="1" height="1"/><rect x="28" y="0" width="1" height="1"/><rect x="28" y="4" width="1" height="1"/><rect x="30" y="2" width="1" height="1"/><rect x="32" y="0" width="1" height="1"/><rect x="32" y="4" width="1" height="1"/><rect x="34" y="2" width="1" height="1"/><rect x="36" y="0" width="1" height="1"/><rect x="36" y="4" width="1" height="1"/><rect x="38" y="2" width="1" height="1"/><rect x="40" y="0" width="1" height="1"/><rect x="40" y="4" width="1" height="1"/><rect x="42" y="2" width="1" height="1"/><rect x="44" y="0" width="1" height="1"/><rect x="44" y="4" width="1" height="1"/><rect x="46" y="2" width="1" height="1"/><rect x="48" y="0" width="1" height="1"/><rect x="48" y="4" width="1" height="1"/><rect x="50" y="2" width="1" height="1"/><rect x="52" y="0" width="1" height="1"/><rect x="52" y="4" width="1" height="1"/><rect x="54" y="2" width="1" height="1"/><rect x="56" y="0" width="1" height="1"/><rect x="56" y="4" width="1" height="1"/><rect x="58" y="2" width="1" height="1"/><rect x="60" y="0" width="1" height="1"/><rect x="60" y="4" width="1" height="1"/><rect x="62" y="2" width="1" height="1"/><rect x="64" y="0" width="1" height="1"/><rect x="64" y="4" width="1" height="1"/><rect x="66" y="2" width="1" height="1"/><rect x="68" y="0" width="1" height="1"/><rect x="68" y="4" width="1" height="1"/><rect x="70" y="2" width="1" height="1"/><rect x="72" y="0" width="1" height="1"/><rect x="72" y="4" width="1" height="1"/><rect x="74" y="2" width="1" height="1"/><rect x="76" y="0" width="1" height="1"/><rect x="76" y="4" width="1" height="1"/><rect x="78" y="2" width="1" height="1"/><rect x="80" y="0" width="1" height="1"/><rect x="80" y="4" width="1" height="1"/><rect x="82" y="2" width="1" height="1"/><rect x="84" y="0" width="1" height="1"/><rect x="84" y="4" width="1" height="1"/><rect x="86" y="2" width="1" height="1"/><rect x="88" y="0" width="1" height="1"/><rect x="88" y="4" width="1" height="1"/><rect x="90" y="2" width="1" height="1"/><rect x="92" y="0" width="1" height="1"/><rect x="92" y="4" width="1" height="1"/><rect x="94" y="2" width="1" height="1"/><rect x="96" y="0" width="1" height="1"/><rect x="96" y="4" width="1" height="1"/><rect x="98" y="2" width="1" height="1"/><rect x="100" y="0" width="1" height="1"/><rect x="100" y="4" width="1" height="1"/><rect x="102" y="2" width="1" height="1"/><rect x="104" y="0" width="1" height="1"/><rect x="104" y="4" width="1" height="1"/><rect x="106" y="2" width="1" height="1"/><rect x="108" y="0" width="1" height="1"/><rect x="108" y="4" width="1" height="1"/><rect x="110" y="2" width="1" height="1"/><rect x="112" y="0" width="1" height="1"/><rect x="112" y="4" width="1" height="1"/><rect x="114" y="2" width="1" height="1"/><rect x="116" y="0" width="1" height="1"/><rect x="116" y="4" width="1" height="1"/><rect x="118" y="2" width="1" height="1"/><rect x="120" y="0" width="1" height="1"/><rect x="120" y="4" width="1" height="1"/><rect x="122" y="2" width="1" height="1"/><rect x="124" y="0" width="1" height="1"/><rect x="124" y="4" width="1" height="1"/><rect x="126" y="2" width="1" height="1"/><rect x="128" y="0" width="1" height="1"/><rect x="128" y="4" width="1" height="1"/><rect x="130" y="2" width="1" height="1"/><rect x="132" y="0" width="1" height="1"/><rect x="132" y="4" width="1" height="1"/><rect x="134" y="2" width="1" height="1"/><rect x="136" y="0" width="1" height="1"/><rect x="136" y="4" width="1" height="1"/><rect x="138" y="2" width="1" height="1"/><rect x="140" y="0" width="1" height="1"/><rect x="140" y="4" width="1" height="1"/><rect x="142" y="2" width="1" height="1"/><rect x="144" y="0" width="1" height="1"/><rect x="144" y="4" width="1" height="1"/><rect x="146" y="2" width="1" height="1"/><rect x="148" y="0" width="1" height="1"/><rect x="148" y="4" width="1" height="1"/><rect x="150" y="2" width="1" height="1"/><rect x="152" y="0" width="1" height="1"/><rect x="152" y="4" width="1" height="1"/><rect x="154" y="2" width="1" height="1"/><rect x="156" y="0" width="1" height="1"/><rect x="156" y="4" width="1" height="1"/><rect x="158" y="2" width="1" height="1"/><rect x="160" y="0" width="1" height="1"/><rect x="160" y="4" width="1" height="1"/><rect x="162" y="2" width="1" height="1"/><rect x="164" y="0" width="1" height="1"/><rect x="164" y="4" width="1" height="1"/><rect x="166" y="2" width="1" height="1"/><rect x="168" y="0" width="1" height="1"/><rect x="168" y="4" width="1" height="1"/><rect x="170" y="2" width="1" height="1"/><rect x="172" y="0" width="1" height="1"/><rect x="172" y="4" width="1" height="1"/><rect x="174" y="2" width="1" height="1"/><rect x="176" y="0" width="1" height="1"/><rect x="176" y="4" width="1" height="1"/><rect x="178" y="2" width="1" height="1"/><rect x="180" y="0" width="1" height="1"/><rect x="180" y="4" width="1" height="1"/><rect x="182" y="2" width="1" height="1"/><rect x="184" y="0" width="1" height="1"/><rect x="184" y="4" width="1" height="1"/><rect x="186" y="2" width="1" height="1"/><rect x="188" y="0" width="1" height="1"/><rect x="188" y="4" width="1" height="1"/><rect x="190" y="2" width="1" height="1"/><rect x="192" y="0" width="1" height="1"/><rect x="192" y="4" width="1" height="1"/><rect x="194" y="2" width="1" height="1"/><rect x="196" y="0" width="1" height="1"/><rect x="196" y="4" width="1" height="1"/><rect x="198" y="2" width="1" height="1"/><rect x="200" y="0" width="1" height="1"/><rect x="200" y="4" width="1" height="1"/><rect x="202" y="2" width="1" height="1"/><rect x="204" y="0" width="1" height="1"/><rect x="204" y="4" width="1" height="1"/><rect x="206" y="2" width="1" height="1"/><rect x="208" y="0" width="1" height="1"/><rect x="208" y="4" width="1" height="1"/><rect x="210" y="2" width="1" height="1"/><rect x="212" y="0" width="1" height="1"/><rect x="212" y="4" width="1" height="1"/><rect x="214" y="2" width="1" height="1"/><rect x="216" y="0" width="1" height="1"/><rect x="216" y="4" width="1" height="1"/><rect x="218" y="2" width="1" height="1"/><rect x="220" y="0" width="1" height="1"/><rect x="220" y="4" width="1" height="1"/><rect x="222" y="2" width="1" height="1"/><rect x="224" y="0" width="1" height="1"/><rect x="224" y="4" width="1" height="1"/><rect x="226" y="2" width="1" height="1"/><rect x="228" y="0" width="1" height="1"/><rect x="228" y="4" width="1" height="1"/><rect x="230" y="2" width="1" height="1"/><rect x="232" y="0" width="1" height="1"/><rect x="232" y="4" width="1" height="1"/><rect x="234" y="2" width="1" height="1"/><rect x="236" y="0" width="1" height="1"/><rect x="236" y="4" width="1" height="1"/><rect x="238" y="2" width="1" height="1"/><rect x="240" y="0" width="1" height="1"/><rect x="240" y="4" width="1" height="1"/><rect x="242" y="2" width="1" height="1"/><rect x="244" y="0" width="1" height="1"/><rect x="244" y="4" width="1" height="1"/><rect x="246" y="2" width="1" height="1"/><rect x="248" y="0" width="1" height="1"/><rect x="248" y="4" width="1" height="1"/><rect x="250" y="2" width="1" height="1"/><rect x="252" y="0" width="1" height="1"/><rect x="252" y="4" width="1" height="1"/><rect x="254" y="2" width="1" height="1"/><rect x="256" y="0" width="1" height="1"/><rect x="256" y="4" width="1" height="1"/><rect x="258" y="2" width="1" height="1"/><rect x="260" y="0" width="1" height="1"/><rect x="260" y="4" width="1" height="1"/><rect x="262" y="2" width="1" height="1"/><rect x="264" y="0" width="1" height="1"/><rect x="264" y="4" width="1" height="1"/><rect x="266" y="2" width="1" height="1"/><rect x="268" y="0" width="1" height="1"/><rect x="268" y="4" width="1" height="1"/><rect x="270" y="2" width="1" height="1"/><rect x="272" y="0" width="1" height="1"/><rect x="272" y="4" width="1" height="1"/><rect x="274" y="2" width="1" height="1"/></g></svg>
<svg class="i" style="left:1265px;top:89px" width="8" height="10" viewBox="0 0 8 10" ><g fill="#000" shape-rendering="crispEdges"><rect x="1" y="0" width="5" height="1"/><rect x="1" y="0" width="1" height="5"/><rect x="4" y="0" width="2" height="5"/><rect x="0" y="5" width="7" height="1"/><rect x="3" y="6" width="1" height="3"/></g></svg>
<svg class="i" style="left:1280px;top:90px" width="9" height="8" viewBox="0 0 9 8" ><path d="M0.5 0.5 L7.9 6.7 M7.9 0.5 L0.5 6.7" stroke="#000" stroke-width="1.5" fill="none"/></svg>
<svg class="i" style="left:908px;top:111px" width="16" height="16" viewBox="0 0 16 16" ><rect width="16" height="16" fill="#355b76"/><path d="M4.6 11 V8.4 Q4.6 7.4 5.6 7.4 H9.6" fill="none" stroke="#dfe6eb" stroke-width="1.1"/><path d="M9.2 5 L12 7.4 L9.2 9.8 Z" fill="#eef2f5"/></svg>
<div style="left:931px;top:108px;width:1px;height:24px;background:#cdd0da;"></div>
<span class="t" style="left:938.42px;top:106.84px;font-family:'Liberation Sans',sans-serif;font-size:12px;line-height:24px;color:#1a1a1a;transform:scaleX(0.9750);transform-origin:0 0;">Filter:</span>
<div style="left:970px;top:109px;width:327px;height:20px;border:1px solid #666;background:#f0f0f0;box-shadow:inset 0 0 0 1px #fff;"></div>
<div style="left:900px;top:134px;width:382px;height:271px;overflow:hidden;">
<div style="left:0px;top:167px;width:382px;height:26px;background:#f0f0f1;"></div>
<svg class="i" style="left:62px;top:-6px" width="9" height="9" viewBox="0 0 9 9" ><g shape-rendering="crispEdges"><rect x="0.5" y="0.5" width="8" height="8" fill="#fff" stroke="#9a9a9a" stroke-width="1"/><rect x="2" y="4" width="5" height="1" fill="#000"/></g></svg>
<svg class="i" style="left:82px;top:-12px" width="24" height="20" viewBox="0 0 24 20" ><path d="M1 0 H10.4 L12 3 V5 H0 V3 Z" fill="#6b8cad"/><rect x="0" y="3" width="12" height="2" fill="#6585a3"/><rect x="12" y="3" width="12" height="2" fill="#9aa3ad"/><rect x="0" y="5" width="24" height="15" fill="#355b76"/></svg>
<span class="t" style="left:125.98px;top:-13.32px;font-family:'DejaVu Sans','Liberation Sans',sans-serif;font-size:12.5px;line-height:24px;color:#000;transform:scaleX(1.1340);transform-origin:0 0;">1000 Ticket</span>
<svg class="i" style="left:108px;top:14px" width="24" height="20" viewBox="0 0 24 20" ><rect x="0" y="0" width="24" height="20" fill="#355b76"/><rect x="0" y="0" width="24" height="2.4" fill="#4f7696"/><rect x="0" y="2.4" width="24" height="2.6" fill="#8b98a6"/><rect x="3" y="7" width="8" height="1.2" fill="#e6ebef"/><rect x="12" y="7" width="9" height="3" fill="#fff"/></svg>
<span class="t" style="left:152.15px;top:12.68px;font-family:'DejaVu Sans','Liberation Sans',sans-serif;font-size:12.5px;line-height:24px;color:#000;transform:scaleX(1.0830);transform-origin:0 0;">1001 Tickets (base)</span>
<svg class="i" style="left:62px;top:46px" width="9" height="9" viewBox="0 0 9 9" ><g shape-rendering="crispEdges"><rect x="0.5" y="0.5" width="8" height="8" fill="#fff" stroke="#9a9a9a" stroke-width="1"/><rect x="2" y="4" width="5" height="1" fill="#000"/></g></svg>
<svg class="i" style="left:82px;top:40px" width="24" height="20" viewBox="0 0 24 20" ><path d="M1 0 H10.4 L12 3 V5 H0 V3 Z" fill="#6b8cad"/><rect x="0" y="3" width="12" height="2" fill="#6585a3"/><rect x="12" y="3" width="12" height="2" fill="#9aa3ad"/><rect x="0" y="5" width="24" height="15" fill="#355b76"/></svg>
<span class="t" style="left:126.06px;top:38.67px;font-family:'DejaVu Sans','Liberation Sans',sans-serif;font-size:12.5px;line-height:24px;color:#000;transform:scaleX(1.0685);transform-origin:0 0;">1100 Status</span>
<svg class="i" style="left:108px;top:66px" width="24" height="20" viewBox="0 0 24 20" ><rect x="0" y="0" width="24" height="20" fill="#355b76"/><rect x="0" y="0" width="24" height="2.4" fill="#4f7696"/><rect x="0" y="2.4" width="24" height="2.6" fill="#8b98a6"/><rect x="3" y="7" width="8" height="1.2" fill="#e6ebef"/><rect x="12" y="7" width="9" height="3" fill="#fff"/></svg>
<span class="t" style="left:152.15px;top:64.67px;font-family:'DejaVu Sans','Liberation Sans',sans-serif;font-size:12.5px;line-height:24px;color:#000;transform:scaleX(1.0768);transform-origin:0 0;">1101 Status type</span>
<svg class="i" style="left:108px;top:92px" width="24" height="20" viewBox="0 0 24 20" ><rect x="0" y="0" width="24" height="20" fill="#355b76"/><rect x="0" y="0" width="24" height="2.4" fill="#4f7696"/><rect x="0" y="2.4" width="24" height="2.6" fill="#8b98a6"/><rect x="3" y="7" width="8" height="1.2" fill="#e6ebef"/><rect x="12" y="7" width="9" height="3" fill="#fff"/></svg>
<span class="t" style="left:152.15px;top:90.67px;font-family:'DejaVu Sans','Liberation Sans',sans-serif;font-size:12.5px;line-height:24px;color:#000;transform:scaleX(1.0835);transform-origin:0 0;">1102 Status (base)</span>
<svg class="i" style="left:62px;top:124px" width="9" height="9" viewBox="0 0 9 9" ><g shape-rendering="crispEdges"><rect x="0.5" y="0.5" width="8" height="8" fill="#fff" stroke="#9a9a9a" stroke-width="1"/><rect x="2" y="4" width="5" height="1" fill="#000"/></g></svg>
<svg class="i" style="left:82px;top:118px" width="24" height="20" viewBox="0 0 24 20" ><path d="M1 0 H10.4 L12 3 V5 H0 V3 Z" fill="#6b8cad"/><rect x="0" y="3" width="12" height="2" fill="#6585a3"/><rect x="12" y="3" width="12" height="2" fill="#9aa3ad"/><rect x="0" y="5" width="24" height="15" fill="#355b76"/></svg>
<span class="t" style="left:126.14px;top:116.67px;font-family:'DejaVu Sans','Liberation Sans',sans-serif;font-size:12.5px;line-height:24px;color:#000;transform:scaleX(1.0115);transform-origin:0 0;">1200 Comment</span>
<svg class="i" style="left:108px;top:144px" width="24" height="20" viewBox="0 0 24 20" ><rect x="0" y="0" width="24" height="20" fill="#355b76"/><rect x="0" y="0" width="24" height="2.4" fill="#4f7696"/><rect x="0" y="2.4" width="24" height="2.6" fill="#8b98a6"/><rect x="3" y="7" width="8" height="1.2" fill="#e6ebef"/><rect x="12" y="7" width="9" height="3" fill="#fff"/></svg>
<span class="t" style="left:152.22px;top:142.68px;font-family:'DejaVu Sans','Liberation Sans',sans-serif;font-size:12.5px;line-height:24px;color:#000;transform:scaleX(1.0276);transform-origin:0 0;">1201 Comment type</span>
<svg class="i" style="left:108px;top:170px" width="24" height="20" viewBox="0 0 24 20" ><rect x="0" y="0" width="24" height="20" fill="#355b76"/><rect x="0" y="0" width="24" height="2.4" fill="#4f7696"/><rect x="0" y="2.4" width="24" height="2.6" fill="#8b98a6"/><rect x="3" y="7" width="8" height="1.2" fill="#e6ebef"/><rect x="12" y="7" width="9" height="3" fill="#fff"/></svg>
<span class="t" style="left:152.2px;top:168.68px;font-family:'DejaVu Sans','Liberation Sans',sans-serif;font-size:12.5px;line-height:24px;color:#000;transform:scaleX(1.0387);transform-origin:0 0;">1202 Comment (base)</span>
<svg class="i" style="left:62px;top:202px" width="9" height="9" viewBox="0 0 9 9" ><g shape-rendering="crispEdges"><rect x="0.5" y="0.5" width="8" height="8" fill="#fff" stroke="#9a9a9a" stroke-width="1"/><rect x="2" y="4" width="5" height="1" fill="#000"/><rect x="4" y="2" width="1" height="5" fill="#000"/></g></svg>
<svg class="i" style="left:82px;top:196px" width="24" height="20" viewBox="0 0 24 20" ><path d="M1 0 H10.4 L12 3 V5 H0 V3 Z" fill="#6b8cad"/><rect x="0" y="3" width="12" height="2" fill="#6585a3"/><rect x="12" y="3" width="12" height="2" fill="#9aa3ad"/><rect x="0" y="5" width="24" height="15" fill="#355b76"/></svg>
<span class="t" style="left:126.12px;top:194.68px;font-family:'DejaVu Sans','Liberation Sans',sans-serif;font-size:12.5px;line-height:24px;color:#000;transform:scaleX(1.0205);transform-origin:0 0;">1300 Customer</span>
<svg class="i" style="left:62px;top:228px" width="9" height="9" viewBox="0 0 9 9" ><g shape-rendering="crispEdges"><rect x="0.5" y="0.5" width="8" height="8" fill="#fff" stroke="#9a9a9a" stroke-width="1"/><rect x="2" y="4" width="5" height="1" fill="#000"/><rect x="4" y="2" width="1" height="5" fill="#000"/></g></svg>
<svg class="i" style="left:82px;top:222px" width="24" height="20" viewBox="0 0 24 20" ><path d="M1 0 H10.4 L12 3 V5 H0 V3 Z" fill="#6b8cad"/><rect x="0" y="3" width="12" height="2" fill="#6585a3"/><rect x="12" y="3" width="12" height="2" fill="#9aa3ad"/><rect x="0" y="5" width="24" height="15" fill="#355b76"/></svg>
<span class="t" style="left:126.12px;top:220.68px;font-family:'DejaVu Sans','Liberation Sans',sans-serif;font-size:12.5px;line-height:24px;color:#000;transform:scaleX(1.0206);transform-origin:0 0;">1400 User</span>
<svg class="i" style="left:36px;top:254px" width="9" height="9" viewBox="0 0 9 9" ><g shape-rendering="crispEdges"><rect x="0.5" y="0.5" width="8" height="8" fill="#fff" stroke="#9a9a9a" stroke-width="1"/><rect x="2" y="4" width="5" height="1" fill="#000"/><rect x="4" y="2" width="1" height="5" fill="#000"/></g></svg>
<svg class="i" style="left:56px;top:248px" width="24" height="20" viewBox="0 0 24 20" ><path d="M1 0 H10.4 L12 3 V5 H0 V3 Z" fill="#6b8cad"/><rect x="0" y="3" width="12" height="2" fill="#6585a3"/><rect x="12" y="3" width="12" height="2" fill="#9aa3ad"/><rect x="0" y="5" width="24" height="15" fill="#355b76"/></svg>
<span class="t" style="left:84.75px;top:246.68px;font-family:'DejaVu Sans','Liberation Sans',sans-serif;font-size:12.5px;line-height:24px;color:#000;transform:scaleX(1.0475);transform-origin:0 0;">3.Workspaces</span>
</div>
<div style="left:1282px;top:134px;width:1px;height:271px;background:#fff;"></div>
<div style="left:1283px;top:134px;width:16px;height:271px;background:#f0f0f0;"></div>
<div style="left:1283px;top:212px;width:15px;height:176px;background:#cdcdcd;"></div>
<div style="left:1298px;top:134px;width:1px;height:271px;background:#f7f3f1;"></div>
<svg class="i" style="left:1287px;top:140px" width="8" height="7" viewBox="0 0 8 7" ><path d="M0.7 5.6 L4 2 L7.3 5.6" stroke="#505050" stroke-width="1.9" fill="none"/></svg>
<svg class="i" style="left:1286.6px;top:393.4px" width="8" height="7" viewBox="0 0 8 7" ><path d="M0.7 1.4 L4 5 L7.3 1.4" stroke="#505050" stroke-width="1.9" fill="none"/></svg>
<div style="left:903px;top:405px;width:394px;height:4px;background:#cccedb;"></div>
<span class="t" style="left:908.22px;top:406.84px;font-family:'Liberation Sans',sans-serif;font-size:12px;line-height:24px;color:#1a1a1a;transform:scaleX(0.9840);transform-origin:0 0;">Properties</span>
<svg class="i" style="left:967px;top:417px" width="294" height="5" viewBox="0 0 294 5" ><g fill="#999" shape-rendering="crispEdges"><rect x="0" y="0" width="1" height="1"/><rect x="0" y="4" width="1" height="1"/><rect x="2" y="2" width="1" height="1"/><rect x="4" y="0" width="1" height="1"/><rect x="4" y="4" width="1" height="1"/><rect x="6" y="2" width="1" height="1"/><rect x="8" y="0" width="1" height="1"/><rect x="8" y="4" width="1" height="1"/><rect x="10" y="2" width="1" height="1"/><rect x="12" y="0" width="1" height="1"/><rect x="12" y="4" width="1" height="1"/><rect x="14" y="2" width="1" height="1"/><rect x="16" y="0" width="1" height="1"/><rect x="16" y="4" width="1" height="1"/><rect x="18" y="2" width="1" height="1"/><rect x="20" y="0" width="1" height="1"/><rect x="20" y="4" width="1" height="1"/><rect x="22" y="2" width="1" height="1"/><rect x="24" y="0" width="1" height="1"/><rect x="24" y="4" width="1" height="1"/><rect x="26" y="2" width="1" height="1"/><rect x="28" y="0" width="1" height="1"/><rect x="28" y="4" width="1" height="1"/><rect x="30" y="2" width="1" height="1"/><rect x="32" y="0" width="1" height="1"/><rect x="32" y="4" width="1" height="1"/><rect x="34" y="2" width="1" height="1"/><rect x="36" y="0" width="1" height="1"/><rect x="36" y="4" width="1" height="1"/><rect x="38" y="2" width="1" height="1"/><rect x="40" y="0" width="1" height="1"/><rect x="40" y="4" width="1" height="1"/><rect x="42" y="2" width="1" height="1"/><rect x="44" y="0" width="1" height="1"/><rect x="44" y="4" width="1" height="1"/><rect x="46" y="2" width="1" height="1"/><rect x="48" y="0" width="1" height="1"/><rect x="48" y="4" width="1" height="1"/><rect x="50" y="2" width="1" height="1"/><rect x="52" y="0" width="1" height="1"/><rect x="52" y="4" width="1" height="1"/><rect x="54" y="2" width="1" height="1"/><rect x="56" y="0" width="1" height="1"/><rect x="56" y="4" width="1" height="1"/><rect x="58" y="2" width="1" height="1"/><rect x="60" y="0" width="1" height="1"/><rect x="60" y="4" width="1" height="1"/><rect x="62" y="2" width="1" height="1"/><rect x="64" y="0" width="1" height="1"/><rect x="64" y="4" width="1" height="1"/><rect x="66" y="2" width="1" height="1"/><rect x="68" y="0" width="1" height="1"/><rect x="68" y="4" width="1" height="1"/><rect x="70" y="2" width="1" height="1"/><rect x="72" y="0" width="1" height="1"/><rect x="72" y="4" width="1" height="1"/><rect x="74" y="2" width="1" height="1"/><rect x="76" y="0" width="1" height="1"/><rect x="76" y="4" width="1" height="1"/><rect x="78" y="2" width="1" height="1"/><rect x="80" y="0" width="1" height="1"/><rect x="80" y="4" width="1" height="1"/><rect x="82" y="2" width="1" height="1"/><rect x="84" y="0" width="1" height="1"/><rect x="84" y="4" width="1" height="1"/><rect x="86" y="2" width="1" height="1"/><rect x="88" y="0" width="1" height="1"/><rect x="88" y="4" width="1" height="1"/><rect x="90" y="2" width="1" height="1"/><rect x="92" y="0" width="1" height="1"/><rect x="92" y="4" width="1" height="1"/><rect x="94" y="2" width="1" height="1"/><rect x="96" y="0" width="1" height="1"/><rect x="96" y="4" width="1" height="1"/><rect x="98" y="2" width="1" height="1"/><rect x="100" y="0" width="1" height="1"/><rect x="100" y="4" width="1" height="1"/><rect x="102" y="2" width="1" height="1"/><rect x="104" y="0" width="1" height="1"/><rect x="104" y="4" width="1" height="1"/><rect x="106" y="2" width="1" height="1"/><rect x="108" y="0" width="1" height="1"/><rect x="108" y="4" width="1" height="1"/><rect x="110" y="2" width="1" height="1"/><rect x="112" y="0" width="1" height="1"/><rect x="112" y="4" width="1" height="1"/><rect x="114" y="2" width="1" height="1"/><rect x="116" y="0" width="1" height="1"/><rect x="116" y="4" width="1" height="1"/><rect x="118" y="2" width="1" height="1"/><rect x="120" y="0" width="1" height="1"/><rect x="120" y="4" width="1" height="1"/><rect x="122" y="2" width="1" height="1"/><rect x="124" y="0" width="1" height="1"/><rect x="124" y="4" width="1" height="1"/><rect x="126" y="2" width="1" height="1"/><rect x="128" y="0" width="1" height="1"/><rect x="128" y="4" width="1" height="1"/><rect x="130" y="2" width="1" height="1"/><rect x="132" y="0" width="1" height="1"/><rect x="132" y="4" width="1" height="1"/><rect x="134" y="2" width="1" height="1"/><rect x="136" y="0" width="1" height="1"/><rect x="136" y="4" width="1" height="1"/><rect x="138" y="2" width="1" height="1"/><rect x="140" y="0" width="1" height="1"/><rect x="140" y="4" width="1" height="1"/><rect x="142" y="2" width="1" height="1"/><rect x="144" y="0" width="1" height="1"/><rect x="144" y="4" width="1" height="1"/><rect x="146" y="2" width="1" height="1"/><rect x="148" y="0" width="1" height="1"/><rect x="148" y="4" width="1" height="1"/><rect x="150" y="2" width="1" height="1"/><rect x="152" y="0" width="1" height="1"/><rect x="152" y="4" width="1" height="1"/><rect x="154" y="2" width="1" height="1"/><rect x="156" y="0" width="1" height="1"/><rect x="156" y="4" width="1" height="1"/><rect x="158" y="2" width="1" height="1"/><rect x="160" y="0" width="1" height="1"/><rect x="160" y="4" width="1" height="1"/><rect x="162" y="2" width="1" height="1"/><rect x="164" y="0" width="1" height="1"/><rect x="164" y="4" width="1" height="1"/><rect x="166" y="2" width="1" height="1"/><rect x="168" y="0" width="1" height="1"/><rect x="168" y="4" width="1" height="1"/><rect x="170" y="2" width="1" height="1"/><rect x="172" y="0" width="1" height="1"/><rect x="172" y="4" width="1" height="1"/><rect x="174" y="2" width="1" height="1"/><rect x="176" y="0" width="1" height="1"/><rect x="176" y="4" width="1" height="1"/><rect x="178" y="2" width="1" height="1"/><rect x="180" y="0" width="1" height="1"/><rect x="180" y="4" width="1" height="1"/><rect x="182" y="2" width="1" height="1"/><rect x="184" y="0" width="1" height="1"/><rect x="184" y="4" width="1" height="1"/><rect x="186" y="2" width="1" height="1"/><rect x="188" y="0" width="1" height="1"/><rect x="188" y="4" width="1" height="1"/><rect x="190" y="2" width="1" height="1"/><rect x="192" y="0" width="1" height="1"/><rect x="192" y="4" width="1" height="1"/><rect x="194" y="2" width="1" height="1"/><rect x="196" y="0" width="1" height="1"/><rect x="196" y="4" width="1" height="1"/><rect x="198" y="2" width="1" height="1"/><rect x="200" y="0" width="1" height="1"/><rect x="200" y="4" width="1" height="1"/><rect x="202" y="2" width="1" height="1"/><rect x="204" y="0" width="1" height="1"/><rect x="204" y="4" width="1" height="1"/><rect x="206" y="2" width="1" height="1"/><rect x="208" y="0" width="1" height="1"/><rect x="208" y="4" width="1" height="1"/><rect x="210" y="2" width="1" height="1"/><rect x="212" y="0" width="1" height="1"/><rect x="212" y="4" width="1" height="1"/><rect x="214" y="2" width="1" height="1"/><rect x="216" y="0" width="1" height="1"/><rect x="216" y="4" width="1" height="1"/><rect x="218" y="2" width="1" height="1"/><rect x="220" y="0" width="1" height="1"/><rect x="220" y="4" width="1" height="1"/><rect x="222" y="2" width="1" height="1"/><rect x="224" y="0" width="1" height="1"/><rect x="224" y="4" width="1" height="1"/><rect x="226" y="2" width="1" height="1"/><rect x="228" y="0" width="1" height="1"/><rect x="228" y="4" width="1" height="1"/><rect x="230" y="2" width="1" height="1"/><rect x="232" y="0" width="1" height="1"/><rect x="232" y="4" width="1" height="1"/><rect x="234" y="2" width="1" height="1"/><rect x="236" y="0" width="1" height="1"/><rect x="236" y="4" width="1" height="1"/><rect x="238" y="2" width="1" height="1"/><rect x="240" y="0" width="1" height="1"/><rect x="240" y="4" width="1" height="1"/><rect x="242" y="2" width="1" height="1"/><rect x="244" y="0" width="1" height="1"/><rect x="244" y="4" width="1" height="1"/><rect x="246" y="2" width="1" height="1"/><rect x="248" y="0" width="1" height="1"/><rect x="248" y="4" width="1" height="1"/><rect x="250" y="2" width="1" height="1"/><rect x="252" y="0" width="1" height="1"/><rect x="252" y="4" width="1" height="1"/><rect x="254" y="2" width="1" height="1"/><rect x="256" y="0" width="1" height="1"/><rect x="256" y="4" width="1" height="1"/><rect x="258" y="2" width="1" height="1"/><rect x="260" y="0" width="1" height="1"/><rect x="260" y="4" width="1" height="1"/><rect x="262" y="2" width="1" height="1"/><rect x="264" y="0" width="1" height="1"/><rect x="264" y="4" width="1" height="1"/><rect x="266" y="2" width="1" height="1"/><rect x="268" y="0" width="1" height="1"/><rect x="268" y="4" width="1" height="1"/><rect x="270" y="2" width="1" height="1"/><rect x="272" y="0" width="1" height="1"/><rect x="272" y="4" width="1" height="1"/><rect x="274" y="2" width="1" height="1"/><rect x="276" y="0" width="1" height="1"/><rect x="276" y="4" width="1" height="1"/><rect x="278" y="2" width="1" height="1"/><rect x="280" y="0" width="1" height="1"/><rect x="280" y="4" width="1" height="1"/><rect x="282" y="2" width="1" height="1"/><rect x="284" y="0" width="1" height="1"/><rect x="284" y="4" width="1" height="1"/><rect x="286" y="2" width="1" height="1"/><rect x="288" y="0" width="1" height="1"/><rect x="288" y="4" width="1" height="1"/><rect x="290" y="2" width="1" height="1"/><rect x="292" y="0" width="1" height="1"/><rect x="292" y="4" width="1" height="1"/></g></svg>
<svg class="i" style="left:1265px;top:414px" width="8" height="10" viewBox="0 0 8 10" ><g fill="#000" shape-rendering="crispEdges"><rect x="1" y="0" width="5" height="1"/><rect x="1" y="0" width="1" height="5"/><rect x="4" y="0" width="2" height="5"/><rect x="0" y="5" width="7" height="1"/><rect x="3" y="6" width="1" height="3"/></g></svg>
<svg class="i" style="left:1280px;top:415px" width="9" height="8" viewBox="0 0 9 8" ><path d="M0.5 0.5 L7.9 6.7 M7.9 0.5 L0.5 6.7" stroke="#000" stroke-width="1.5" fill="none"/></svg>
<div style="left:903px;top:431px;width:26px;height:26px;border:1px solid #3399ff;"></div>
<div style="left:931px;top:433px;width:1px;height:24px;background:#cdd0da;"></div>
<div style="left:963px;top:433px;width:1px;height:24px;background:#cdd0da;"></div>
<div style="left:995px;top:433px;width:1px;height:24px;background:#cdd0da;"></div>
<svg class="i" style="left:905.7px;top:434px" width="20" height="20" viewBox="0 0 20 20" ><rect x="0.5" y="0" width="8" height="8" fill="#355b76"/><rect x="0.5" y="11" width="8" height="8" fill="#355b76"/><rect x="4" y="8" width="1" height="3" fill="#8a8a8a"/><path d="M4.5 1.6 L6.8 4 L4.5 6.4 L2.2 4 Z" fill="#3daa7d"/><path d="M4.5 12.6 L6.8 15 L4.5 17.4 L2.2 15 Z" fill="#1a9fe0"/><rect x="10.4" y="0.8" width="9" height="1.4" rx="0.6" fill="#3daa7d"/><rect x="10.4" y="3.2" width="6.8" height="1.4" fill="#a9c4b6"/><rect x="10.4" y="5.8" width="6.8" height="1.2" fill="#6fb896"/><rect x="10.4" y="11.8" width="9" height="1.4" rx="0.6" fill="#1a9fe0"/><rect x="10.4" y="14" width="6.8" height="1.2" fill="#5fb0d8"/><rect x="10.4" y="16.2" width="6.8" height="1.6" fill="#9fc3d6"/></svg>
<svg class="i" style="left:938px;top:435px" width="19" height="18" viewBox="0 0 19 18" ><rect x="0" y="0" width="19" height="1.8" fill="#355b76"/><g fill="#9dbdac"><rect x="0" y="4.5" width="8" height="1.7"/><rect x="11" y="4.5" width="8" height="1.7"/><rect x="0" y="9.3" width="8" height="1.7"/><rect x="11" y="9.3" width="8" height="1.7"/></g><g fill="#3daa7d"><rect x="0" y="7.3" width="8" height="0.9"/><rect x="11" y="7.3" width="8" height="0.9"/></g><g fill="#8fb8d0"><rect x="0" y="13.3" width="8" height="1.9"/><rect x="11" y="13.3" width="8" height="1.9"/></g><g fill="#1a9fe0"><rect x="0" y="16" width="8" height="1"/><rect x="11" y="16" width="8" height="1"/></g></svg>
<span class="t" style="left:970.5px;top:426.37px;font-family:'Liberation Sans',sans-serif;font-size:12.2px;line-height:24px;color:#3daa7d;font-weight:700;transform:scaleX(0.82);transform-origin:0 0;-webkit-text-stroke:0.3px #3daa7d;">A</span>
<span class="t" style="left:970.8px;top:436.77px;font-family:'Liberation Sans',sans-serif;font-size:12.2px;line-height:24px;color:#e0443e;font-weight:700;transform:scaleX(0.88);transform-origin:0 0;-webkit-text-stroke:0.3px #e0443e;">Z</span>
<svg class="i" style="left:980px;top:434px" width="9" height="20" viewBox="0 0 9 20" ><rect x="3" y="1" width="2.2" height="2.2" fill="#355b76"/><path d="M4.1 4.6 V17.6 M0.6 14 L4.1 18 L7.8 14" fill="none" stroke="#355b76" stroke-width="2.1"/></svg>
<div style="left:999px;top:433px;width:150px;height:22px;border:1px solid #c2c2c2;"></div>
<svg class="i" style="left:1138px;top:443px" width="7" height="5" viewBox="0 0 7 5" ><path d="M0 0 H7 L3.5 4.2 Z" fill="#bdbdbd"/></svg>
<div style="left:900px;top:459px;width:381px;height:249px;overflow:hidden;">
<svg class="i" style="left:4px;top:6px" width="9" height="9" viewBox="0 0 9 9" ><g shape-rendering="crispEdges"><rect x="0.5" y="0.5" width="8" height="8" fill="#fff" stroke="#111" stroke-width="1"/><rect x="2" y="4" width="5" height="1" fill="#000"/><rect x="4" y="2" width="1" height="5" fill="#000"/></g></svg>
<span class="t" style="left:18.59px;top:-2.16px;font-family:'Liberation Sans',sans-serif;font-size:12px;line-height:24px;color:#1a1a1a;font-weight:700;transform:scaleX(1.0122);transform-origin:0 0;">Object</span>
<svg class="i" style="left:4px;top:25px" width="9" height="9" viewBox="0 0 9 9" ><g shape-rendering="crispEdges"><rect x="0.5" y="0.5" width="8" height="8" fill="#fff" stroke="#111" stroke-width="1"/><rect x="2" y="4" width="5" height="1" fill="#000"/></g></svg>
<span class="t" style="left:19.37px;top:16.84px;font-family:'Liberation Sans',sans-serif;font-size:12px;line-height:24px;color:#1a1a1a;font-weight:700;transform:scaleX(0.9786);transform-origin:0 0;">Format</span>
<div style="left:16px;top:39px;width:185px;height:18px;background:#f6f6f6;"></div>
<div style="left:202px;top:39px;width:179px;height:18px;background:#f6f6f6;"></div>
<span class="t" style="left:19.42px;top:35.84px;font-family:'Liberation Sans',sans-serif;font-size:12px;line-height:24px;color:#1a1a1a;transform:scaleX(0.9845);transform-origin:0 0;">External Connection</span>
<div style="left:202px;top:58px;width:179px;height:18px;background:#f6f6f6;"></div>
<span class="t" style="left:19.45px;top:54.84px;font-family:'Liberation Sans',sans-serif;font-size:12px;line-height:24px;color:#1a1a1a;transform:scaleX(0.9548);transform-origin:0 0;">Data Source</span>
<span class="t" style="left:204.75px;top:54.84px;font-family:'Liberation Sans',sans-serif;font-size:12px;line-height:24px;color:#1a1a1a;transform:scaleX(1.0178);transform-origin:0 0;">t_comments</span>
<div style="left:347px;top:58px;width:17px;height:18px;background:#f8f8f9;border:1px solid #d9dbe8;"></div>
<span class="t" style="left:350.4000000000001px;top:54.84px;font-family:'Liberation Sans',sans-serif;font-size:12px;line-height:24px;color:#000;font-weight:700;letter-spacing:0.7px;">...</span>
<svg class="i" style="left:368px;top:65px" width="9" height="5" viewBox="0 0 9 5" ><path d="M0 0 H9.4 L4.7 5 Z" fill="#6d6d6d"/></svg>
<svg class="i" style="left:4px;top:82px" width="9" height="9" viewBox="0 0 9 9" ><g shape-rendering="crispEdges"><rect x="0.5" y="0.5" width="8" height="8" fill="#fff" stroke="#111" stroke-width="1"/><rect x="2" y="4" width="5" height="1" fill="#000"/></g></svg>
<span class="t" style="left:18.63px;top:73.84px;font-family:'Liberation Sans',sans-serif;font-size:12px;line-height:24px;color:#1a1a1a;font-weight:700;transform:scaleX(0.9429);transform-origin:0 0;">System Fields</span>
<div style="left:16px;top:96px;width:185px;height:18px;background:#f6f6f6;"></div>
<div style="left:202px;top:96px;width:179px;height:18px;background:#f6f6f6;"></div>
<span class="t" style="left:19.45px;top:92.84px;font-family:'Liberation Sans',sans-serif;font-size:12px;line-height:24px;color:#1a1a1a;transform:scaleX(0.9524);transform-origin:0 0;">Record ID</span>
<span class="t" style="left:205.13px;top:92.84px;font-family:'Liberation Sans',sans-serif;font-size:12px;line-height:24px;color:#1a1a1a;transform:scaleX(1.0246);transform-origin:0 0;">idkart</span>
<div style="left:16px;top:115px;width:185px;height:18px;background:#f6f6f6;"></div>
<div style="left:202px;top:115px;width:179px;height:18px;background:#f6f6f6;"></div>
<span class="t" style="left:19.41px;top:111.84px;font-family:'Liberation Sans',sans-serif;font-size:12px;line-height:24px;color:#1a1a1a;transform:scaleX(0.9928);transform-origin:0 0;">Date &amp; Time (Created)</span>
<div style="left:16px;top:134px;width:185px;height:18px;background:#f6f6f6;"></div>
<div style="left:202px;top:134px;width:179px;height:18px;background:#f6f6f6;"></div>
<span class="t" style="left:19.4px;top:130.84px;font-family:'Liberation Sans',sans-serif;font-size:12px;line-height:24px;color:#1a1a1a;transform:scaleX(1.0041);transform-origin:0 0;">Date &amp; Time (Updated)</span>
<div style="left:16px;top:153px;width:185px;height:18px;background:#f6f6f6;"></div>
<div style="left:202px;top:153px;width:179px;height:18px;background:#f6f6f6;"></div>
<span class="t" style="left:19.41px;top:149.84px;font-family:'Liberation Sans',sans-serif;font-size:12px;line-height:24px;color:#1a1a1a;transform:scaleX(0.9938);transform-origin:0 0;">Date &amp; Time (Closed)</span>
<div style="left:16px;top:172px;width:185px;height:18px;background:#f6f6f6;"></div>
<div style="left:202px;top:172px;width:179px;height:18px;background:#f6f6f6;"></div>
<span class="t" style="left:18.79px;top:168.84px;font-family:'Liberation Sans',sans-serif;font-size:12px;line-height:24px;color:#1a1a1a;transform:scaleX(0.9070);transform-origin:0 0;">User ID</span>
<svg class="i" style="left:4px;top:196px" width="9" height="9" viewBox="0 0 9 9" ><g shape-rendering="crispEdges"><rect x="0.5" y="0.5" width="8" height="8" fill="#fff" stroke="#111" stroke-width="1"/><rect x="2" y="4" width="5" height="1" fill="#000"/></g></svg>
<span class="t" style="left:18.64px;top:187.84px;font-family:'Liberation Sans',sans-serif;font-size:12px;line-height:24px;color:#1a1a1a;font-weight:700;transform:scaleX(0.9109);transform-origin:0 0;">Caching</span>
<div style="left:16px;top:210px;width:185px;height:18px;background:#f6f6f6;"></div>
<div style="left:202px;top:210px;width:179px;height:18px;background:#f6f6f6;"></div>
<span class="t" style="left:19.45px;top:206.84px;font-family:'Liberation Sans',sans-serif;font-size:12px;line-height:24px;color:#1a1a1a;transform:scaleX(0.9548);transform-origin:0 0;">Data Source</span>
<div style="left:16px;top:229px;width:185px;height:18px;background:#f6f6f6;"></div>
<div style="left:202px;top:229px;width:179px;height:18px;background:#f6f6f6;"></div>
<span class="t" style="left:19.42px;top:225.84px;font-family:'Liberation Sans',sans-serif;font-size:12px;line-height:24px;color:#1a1a1a;transform:scaleX(0.9812);transform-origin:0 0;">Primary Field</span>
<div style="left:16px;top:248px;width:185px;height:18px;background:#f6f6f6;"></div>
<div style="left:202px;top:248px;width:179px;height:18px;background:#f6f6f6;"></div>
</div>
<div style="left:1281px;top:460px;width:1px;height:248px;background:#fff;"></div>
<div style="left:1282px;top:460px;width:16px;height:248px;background:#f0f0f0;"></div>
<div style="left:1282px;top:477px;width:15px;height:146px;background:#cdcdcd;"></div>
<svg class="i" style="left:1286px;top:466px" width="8" height="7" viewBox="0 0 8 7" ><path d="M0.7 5.6 L4 2 L7.3 5.6" stroke="#505050" stroke-width="1.9" fill="none"/></svg>
<svg class="i" style="left:1285.7px;top:696px" width="8" height="7" viewBox="0 0 8 7" ><path d="M0.7 1.4 L4 5 L7.3 1.4" stroke="#505050" stroke-width="1.9" fill="none"/></svg>
<div style="left:901px;top:709px;width:398px;height:21px;background:#f5f5f6;"></div>
<div style="left:901px;top:712px;width:398px;height:1px;background:#f0f0f2;"></div>
<span class="t" style="left:906.97px;top:711.44px;font-family:'Liberation Sans',sans-serif;font-size:12px;line-height:24px;color:#1a1a1a;font-weight:700;transform:scaleX(0.9710);transform-origin:0 0;">Data Source</span>
<span class="t" style="left:1123.46px;top:728.84px;font-family:'Liberation Sans',sans-serif;font-size:12px;line-height:24px;color:#fff;transform:scaleX(0.8894);transform-origin:0 0;">5.4.8.24</span>
<svg class="i" style="left:1287px;top:738px" width="8" height="8" viewBox="0 0 8 8" ><g shape-rendering="crispEdges"><g fill="#00529f"><rect x="6" y="0" width="1" height="1"/><rect x="4" y="2" width="1" height="1"/><rect x="6" y="2" width="1" height="1"/><rect x="2" y="4" width="1" height="1"/><rect x="4" y="4" width="1" height="1"/><rect x="6" y="4" width="1" height="1"/><rect x="0" y="6" width="1" height="1"/><rect x="2" y="6" width="1" height="1"/><rect x="4" y="6" width="1" height="1"/><rect x="6" y="6" width="1" height="1"/></g><g fill="#66c4ff"><rect x="7" y="1" width="1" height="1"/><rect x="5" y="3" width="1" height="1"/><rect x="7" y="3" width="1" height="1"/><rect x="3" y="5" width="1" height="1"/><rect x="5" y="5" width="1" height="1"/><rect x="7" y="5" width="1" height="1"/><rect x="1" y="7" width="1" height="1"/><rect x="3" y="7" width="1" height="1"/><rect x="5" y="7" width="1" height="1"/><rect x="7" y="7" width="1" height="1"/></g></g></svg>
</div></body></html>
